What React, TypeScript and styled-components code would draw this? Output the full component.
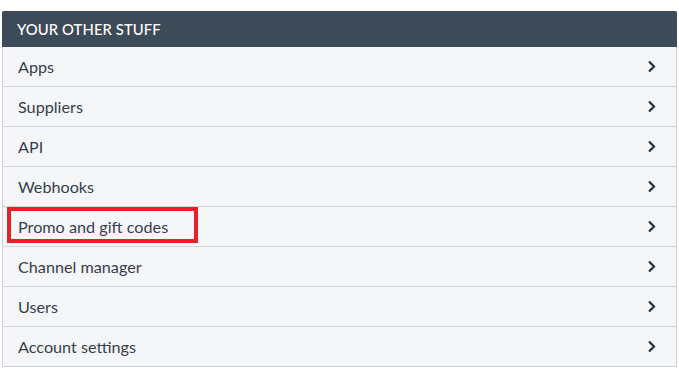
import React from 'react';
import styled, { createGlobalStyle } from 'styled-components';

const GlobalStyle = createGlobalStyle`
    body {
        margin: 0;
        background: #ffffff;
        font-family: Lato, 'Noto Sans', sans-serif;
    }
`;

const Page = styled.div`
    padding: 11px 2px 0 2px;
    width: 675px;
`;

const Card = styled.div`
    border: 1px solid #cfd2d6;
    border-top: none;
    background: #f5f6f8;
`;

const Header = styled.div`
    height: 36px;
    display: flex;
    align-items: center;
    padding: 0 15px;
    background: #3d4a57;
    color: #ffffff;
    font-size: 14.8px;
    font-weight: 500;
    letter-spacing: 0.1px;
    text-transform: uppercase;
    margin: 0 -1px;
    border-radius: 2px 2px 0 0;
`;

const List = styled.ul`
    list-style: none;
    margin: 0;
    padding: 0;
`;

const Row = styled.li`
    position: relative;
    height: 39px;
    display: flex;
    align-items: center;
    justify-content: space-between;
    padding: 0 20px 0 15px;
    border-top: 1px solid #d3d5d8;
    color: #36404c;
    font-size: 16.2px;

    &:first-child {
        border-top: none;
    }
`;

const Highlight = styled.div`
    position: absolute;
    left: 4px;
    top: 0px;
    width: 191px;
    height: 36px;
    box-sizing: border-box;
    border: 4px solid #e8202a;
    pointer-events: none;
`;

const Chevron = () => (
    <svg width="9" height="13" viewBox="0 0 9 13">
        <path d="M2 1.5 L7 6.5 L2 11.5" fill="none" stroke="#1f2d3d" strokeWidth="2.2" />
    </svg>
);

const items = [
    'Apps',
    'Suppliers',
    'API',
    'Webhooks',
    'Promo and gift codes',
    'Channel manager',
    'Users',
    'Account settings',
];

const App = () => {
    return (
        <Page>
            <GlobalStyle />
            <Card>
                <Header>Your other stuff</Header>
                <List>
                    {items.map((item) => (
                        <Row key={item}>
                            <span>{item}</span>
                            <Chevron />
                            {item === 'Promo and gift codes' && <Highlight />}
                        </Row>
                    ))}
                </List>
            </Card>
        </Page>
    );
};

export default App;
